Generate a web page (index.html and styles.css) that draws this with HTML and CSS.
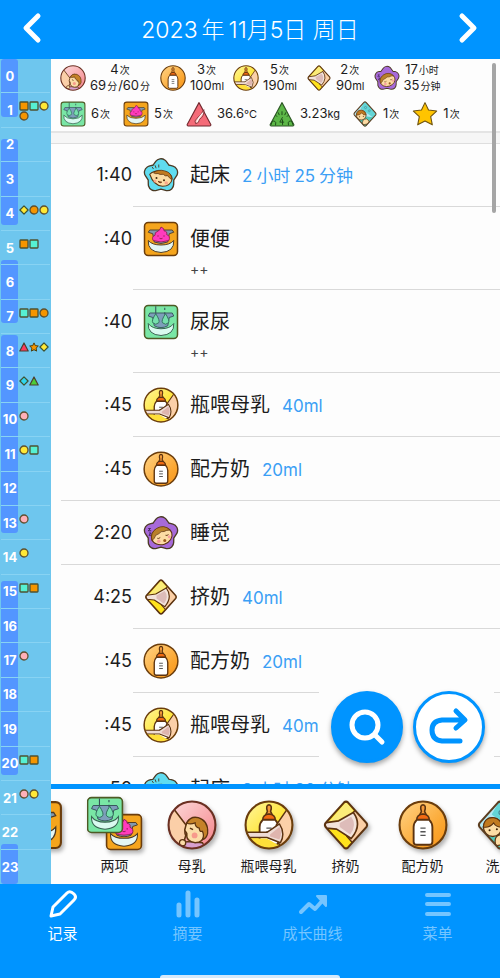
FILE: index.html
```html
<!DOCTYPE html>
<html lang="zh-CN">
<head>
    <meta charset="UTF-8">
    <meta name="viewport" content="width=device-width, initial-scale=1.0">
    <title>育儿记录</title>
    <link rel="stylesheet" href="styles.css">
</head>
<body>
    <svg class="sprite" aria-hidden="true">
        <defs>
            <linearGradient id="g-orange" x1="0" y1="0" x2="1" y2="1"><stop offset="0" stop-color="#ffd488"/><stop offset=".7" stop-color="#fba52e"/><stop offset="1" stop-color="#f7941d"/></linearGradient>
            <linearGradient id="g-yellow" x1="0" y1="0" x2="1" y2="1"><stop offset="0" stop-color="#fff6a0"/><stop offset=".6" stop-color="#ffe32e"/></linearGradient>
            <linearGradient id="g-pink" x1="0" y1="0" x2="1" y2="1"><stop offset="0" stop-color="#fddcdc"/><stop offset="1" stop-color="#f48288"/></linearGradient>
            <clipPath id="c-circle"><circle cx="24" cy="24" r="22"/></clipPath>
            <clipPath id="c-diamond"><path d="M22 2.500Q24 .5 26 2.500L43.500 22Q45 24 43.500 26L26 45.500Q24 47.500 22 45.500L4.500 26Q3 24 4.500 22Z"/></clipPath>
        </defs>

        <!-- event icons -->
        <symbol id="bottle" viewBox="0 0 48 48">
            <path d="M22.500 11Q20.500 5 24 4.500Q27.500 5 25.500 11L27 14H21Z" fill="#f59a3a" stroke="#5c3310" stroke-width="1.500"/>
            <path d="M18 19Q18 14 24 13.500Q30 14 30 19Z" fill="#f26a12" stroke="#5c3310" stroke-width="1.500"/>
            <path d="M18 19H30Q33 22 33 26V40Q33 43 30 43H18Q15 43 15 40V26Q15 22 18 19Z" fill="#fff" stroke="#5c3310" stroke-width="1.800"/>
            <path d="M21.500 27H26.500M21.500 30.500H26.500M21.500 34H26.500" stroke="#555" stroke-width="1.300"/>
        </symbol>
        <symbol id="formula" viewBox="0 0 48 48">
            <circle cx="24" cy="24" r="22.500" fill="url(#g-orange)" stroke="#6b3d0c" stroke-width="2"/>
            <use href="#bottle"/>
        </symbol>
        <symbol id="bottle-milk" viewBox="0 0 48 48">
            <circle cx="24" cy="24" r="22.500" fill="url(#g-yellow)"/>
            <use href="#bottle"/>
            <g clip-path="url(#c-circle)">
                <path d="M42 8L31 24Q30 38 36 46L50 44V8Z" fill="#fbd0a8" stroke="#5c3310" stroke-width="1.400"/>
                <path d="M0 31H22L34 23Q40 32 35 41L22 36H0" fill="#efdcd5" stroke="#5c3310" stroke-width="1.400" stroke-linejoin="round"/>
                <path d="M25 33L34 26Q37 32 34 38L25 35Z" fill="#dfb5ae"/>
                <path d="M4 37H22L34 44Q24 49 14 45Z" fill="#ffdf3a"/>
            </g>
            <circle cx="24" cy="24" r="22.500" fill="none" stroke="#6b3d0c" stroke-width="2"/>
        </symbol>
        <symbol id="pump" viewBox="0 0 48 48">
            <g clip-path="url(#c-diamond)">
                <path d="M0 0H48V48H0Z" fill="#ffe21c"/>
                <path d="M5 24L24 2L31 10Q28 16 18 19L6 22Z" fill="#fbec79"/>
                <path d="M31 12L35 7L48 24L31 42L25 35Q36 30 31 12Z" fill="#fbcfa5" stroke="#5c3310" stroke-width="1.400"/>
                <path d="M3 22L17 20L31 12Q40 24 29 37L15 28L5 27Z" fill="#f3e4dc" stroke="#5c3310" stroke-width="1.600" stroke-linejoin="round"/>
                <path d="M18 22L29 16Q35 24 28 33L18 26Z" fill="#ddbcb9"/>
            </g>
            <path d="M22 2.500Q24 .5 26 2.500L43.500 22Q45 24 43.500 26L26 45.500Q24 47.500 22 45.500L4.500 26Q3 24 4.500 22Z" fill="none" stroke="#5c3310" stroke-width="2"/>
        </symbol>
        <symbol id="nursing" viewBox="0 0 48 48">
            <circle cx="24" cy="24" r="22.500" fill="url(#g-pink)"/>
            <g clip-path="url(#c-circle)">
                <path d="M6 8L19 25Q16 30 18 34L14 48L0 44V8Z" fill="#fbcfa8" stroke="#5c3310" stroke-width="1.500"/>
                <path d="M14 48Q12 40 20 40L34 41L38 48Z" fill="#d8a0cf" stroke="#5c3310" stroke-width="1.300"/>
                <path d="M18 25Q19 18 27 17Q38 19 37 31Q35 41 27 41Q18 40 19 32L17 29Z" fill="#fbdca8" stroke="#5c3310" stroke-width="1.400"/>
                <path d="M19 22Q23 15 30 17Q40 20 39 32Q38 37 34 38Q36 34 34 30Q31 31 31 27Q27 26 27 22Q22 24 19 22Z" fill="#c58228" stroke="#5c3310" stroke-width="1.200"/>
                <circle cx="26.500" cy="34" r="2.800" fill="#f79a8c"/>
                <path d="M22 27L25 28.500" stroke="#5c3310" stroke-width="1.400"/>
                <circle cx="15" cy="41" r="3" fill="#fbdca8" stroke="#5c3310" stroke-width="1.200"/>
            </g>
            <circle cx="24" cy="24" r="22.500" fill="none" stroke="#6b3022" stroke-width="2"/>
        </symbol>
        <symbol id="flower" viewBox="0 0 48 48">
            <path d="M24 11L29 18L37.500 20.500L32.500 28L32.300 36.300L24 34L15.700 36.300L15.500 28L10.500 20.500L19 18Z" stroke="#4b3a24" stroke-width="19" stroke-linejoin="round"/>
            <path d="M24 11L29 18L37.500 20.500L32.500 28L32.300 36.300L24 34L15.700 36.300L15.500 28L10.500 20.500L19 18Z" fill="currentColor" stroke="currentColor" stroke-width="15.500" stroke-linejoin="round"/>
        </symbol>
        <symbol id="wake" viewBox="0 0 48 48">
            <use href="#flower" color="#5fdcf0"/>
            <path d="M12 13L14 16M16 11L17.500 15M21 10V14" stroke="#4b3a24" stroke-width="1.200"/>
            <path d="M9 23Q15 17 26 19Q38 21 39 29Q37 39 26 39Q14 38 9 23Z" fill="#fcdca4" stroke="#5c3310" stroke-width="1.400"/>
            <path d="M14 21Q20 16 29 18.500Q39 21 38 30Q35 28 33 25Q29 26 27 23Q22 24 20 22Q17 23 14 21Z" fill="#c17a1f" stroke="#5c3310" stroke-width="1"/>
            <circle cx="18" cy="28" r="1.300" fill="#3f2409"/><circle cx="28" cy="31" r="1.300" fill="#3f2409"/>
            <circle cx="16" cy="32" r="2" fill="#f8a58a"/><circle cx="31" cy="34.500" r="2.300" fill="#f8a58a"/>
            <path d="M20 32.500Q23 36 25 33.500Z" fill="#e5573e" stroke="#5c3310"/>
        </symbol>
        <symbol id="sleep" viewBox="0 0 48 48">
            <use href="#flower" color="#a76ad9"/>
            <path d="M7 18H10L7 21H11M8 24H11L8 27H11" fill="none" stroke="#3b2352" stroke-width="1.200"/>
            <ellipse cx="25" cy="28" rx="14" ry="11.500" transform="rotate(-18 25 28)" fill="#fcdca4" stroke="#5c3310" stroke-width="1.400"/>
            <path d="M12 34Q9 24 18 18Q28 12 36 20Q31 20 28 22Q24 21 21 25Q16 26 15 31Z" fill="#b8802a" stroke="#5c3310"/>
            <path d="M19 31Q21 32 23 30M30 27Q32 28 34 26" fill="none" stroke="#5c3310" stroke-width="1.200"/>
            <circle cx="21" cy="35" r="2.400" fill="#f8a0a0"/><circle cx="35" cy="29" r="2" fill="#f8a0a0"/>
            <circle cx="29" cy="34" r="2" fill="#9a5a1c"/>
        </symbol>
        <symbol id="poop" viewBox="0 0 48 48">
            <rect x="2" y="2" width="44" height="44" rx="5" fill="#f5a51d" stroke="#6b3d0c" stroke-width="2"/>
            <path d="M9 12H39L41 15L35 17L33 28Q24 32 15 28L13 17L7 15Z" fill="#8298ad" stroke="#4b3a24" stroke-width="1.200"/>
            <path d="M24 8Q29 10 28 13Q33 14 31.500 18Q37 20 34.500 26Q24 30 13.500 26Q11 21 16 19Q15 15 20 13.500Q23 12 24 8Z" fill="#ff3bbd" stroke="#8e1f4e" stroke-width="1.200"/>
            <path d="M20 19V21M28 19V21M22 23Q24 24.500 26 23" fill="none" stroke="#8e1f4e" stroke-width="1.200"/>
            <path d="M7 26Q12 32 24 32Q36 32 41 26Q42 41 24 42Q6 41 7 26Z" fill="#e4f6f4" stroke="#4b3a24" stroke-width="1.300"/>
        </symbol>
        <symbol id="pee" viewBox="0 0 48 48">
            <rect x="2" y="2" width="44" height="44" rx="5" fill="#79e6a5" stroke="#4d5a24" stroke-width="2"/>
            <path d="M9 12H39L41 16L35 18L33 29Q24 34 15 29L13 18L7 16Z" fill="#7d9eba" stroke="#35515a" stroke-width="1.200"/>
            <path d="M17 3V13M29 5V8M29 11V14" stroke="#35515a" stroke-width="1.400"/>
            <path d="M17 13Q23 22 21 25Q17 29 13 25Q11 22 17 13ZM30 13Q36 22 34 25Q30 29 26 25Q24 22 30 13Z" fill="#76dfad" stroke="#2e6c57" stroke-width="1.200"/>
            <path d="M7 26Q12 33 24 33Q36 33 41 26Q42 41 24 42Q6 41 7 26Z" fill="#d9faf0" stroke="#35604e" stroke-width="1.300"/>
        </symbol>
        <symbol id="both" viewBox="0 0 56 56">
            <use href="#poop" x="18" y="17" width="38" height="38"/>
            <use href="#pee" x="-1" y="0" width="38" height="38"/>
        </symbol>
        <symbol id="temperature" viewBox="0 0 48 48">
            <path d="M24 3L46 44Q46 46 44 46H4Q2 46 2 44Z" fill="#f46b78" stroke="#71282e" stroke-width="2" stroke-linejoin="round"/>
            <path d="M18 42Q14 37 20 32Q28 27 33 16Q34 28 25 34Q24 41 18 42Z" fill="#fbb6b5" stroke="#71282e" stroke-width="1.500"/>
            <path d="M20 39L24 31L31 22" fill="none" stroke="#fff" stroke-width="2"/>
        </symbol>
        <symbol id="weight" viewBox="0 0 48 48">
            <path d="M24 3L46 44Q46 46 44 46H4Q2 46 2 44Z" fill="#5cb747" stroke="#2c5724" stroke-width="2" stroke-linejoin="round"/>
            <path d="M12 26L15 29M17 21L19 26M24 19V26M31 21L29 26M36 26L33 29" stroke="#1e4a19" stroke-width="1.800"/>
            <path d="M4 44Q5 36 10 37Q14 39 12 45M44 44Q43 36 38 37Q34 39 36 45M25 30L20 39H28M25 34V44" fill="none" stroke="#1e4a19" stroke-width="1.800"/>
        </symbol>
        <symbol id="bath" viewBox="0 0 48 48">
            <g clip-path="url(#c-diamond)">
                <path d="M0 0H48V48H0Z" fill="#b4e8f2"/>
                <path d="M24 0L48 24L38 30L16 14Z" fill="#63d5d6"/>
                <circle cx="25" cy="12" r="2" fill="none" stroke="#46828f"/><circle cx="32" cy="18" r="1.800" fill="none" stroke="#46828f"/>
                <path d="M4 34Q24 24 46 32L24 50Z" fill="#51c9bb"/>
                <path d="M20 44Q17 33 27 33Q34 36 31 42Z" fill="#fcdca4" stroke="#5c3310" stroke-width="1.200"/>
                <circle cx="17" cy="26" r="9" fill="#fcdca4" stroke="#5c3310" stroke-width="1.300"/>
                <path d="M8 26Q9 16 18 17Q25 18 26 26Q20 26 18 22Q14 27 8 26Z" fill="#c17a1f" stroke="#5c3310"/>
                <circle cx="14" cy="29" r="1" fill="#3f2409"/><circle cx="21" cy="28" r="1" fill="#3f2409"/>
            </g>
            <path d="M22 2.500Q24 .5 26 2.500L43.500 22Q45 24 43.500 26L26 45.500Q24 47.500 22 45.500L4.500 26Q3 24 4.500 22Z" fill="none" stroke="#5c3e20" stroke-width="2"/>
        </symbol>
        <symbol id="star" viewBox="0 0 48 48">
            <path d="M24 3L30.500 16.500L45.500 18.500L34.500 29L37.500 44L24 37L10.500 44L13.500 29L2.500 18.500L17.500 16.500Z" fill="#ffc400" stroke="#6e5310" stroke-width="2" stroke-linejoin="round"/>
        </symbol>

        <!-- timeline marks -->
        <symbol id="m-circle" viewBox="0 0 10 10"><circle cx="5" cy="5" r="4" fill="currentColor" stroke="#5d5030" stroke-width="1.300"/></symbol>
        <symbol id="m-square" viewBox="0 0 10 10"><rect x="1" y="1" width="8" height="8" rx=".8" fill="currentColor" stroke="#4d5230" stroke-width="1.300"/></symbol>
        <symbol id="m-diamond" viewBox="0 0 10 10"><path d="M5 .9L9.100 5L5 9.100L.9 5Z" fill="currentColor" stroke="#3f5230" stroke-width="1.200" stroke-linejoin="round"/></symbol>
        <symbol id="m-triangle" viewBox="0 0 10 10"><path d="M5 1L9.200 9H.8Z" fill="currentColor" stroke="#4d3f30" stroke-width="1.200" stroke-linejoin="round"/></symbol>
        <symbol id="m-star" viewBox="0 0 10 10"><path d="M5 .9L6.300 3.600L9.300 4L7.100 6.100L7.600 9.100L5 7.700L2.400 9.100L2.900 6.100L.7 4L3.700 3.600Z" fill="currentColor" stroke="#4d3f10" stroke-linejoin="round"/></symbol>
    </svg>

    <header class="topbar">
        <button class="day-button" aria-label="前一天"><svg viewBox="0 0 20 32"><path d="M16 4L4 16L16 28"/></svg></button>
        <h1>2023<span class="gap">年</span>11月5日 周日</h1>
        <button class="day-button" aria-label="后一天"><svg viewBox="0 0 20 32"><path d="M4 4L16 16L4 28"/></svg></button>
    </header>

    <div class="middle">
        <aside class="timeline">
            <div class="sleep-bars">
                <i style="top:0%;height:7%"></i>
                <i style="top:9.700%;height:10.400%"></i>
                <i style="top:24.400%;height:7.600%"></i>
                <i style="top:33.500%;height:23.900%"></i>
                <i style="top:63.300%;height:23.500%"></i>
                <i style="top:95.200%;height:4.800%"></i>
            </div>
            <ol class="hours">
                <li><b>0</b></li>
                <li><b>1</b><span class="marks"><svg class="orange"><use href="#m-square"/></svg><svg class="mint"><use href="#m-square"/></svg><svg class="yellow"><use href="#m-circle"/></svg><svg class="orange"><use href="#m-circle"/></svg></span></li>
                <li><b>2</b></li>
                <li><b>3</b></li>
                <li><b>4</b><span class="marks"><svg class="yellow"><use href="#m-diamond"/></svg><svg class="orange"><use href="#m-circle"/></svg><svg class="yellow"><use href="#m-circle"/></svg></span></li>
                <li><b>5</b><span class="marks"><svg class="orange"><use href="#m-square"/></svg><svg class="mint"><use href="#m-square"/></svg></span></li>
                <li><b>6</b></li>
                <li><b>7</b><span class="marks"><svg class="mint"><use href="#m-square"/></svg><svg class="orange"><use href="#m-square"/></svg><svg class="orange"><use href="#m-circle"/></svg></span></li>
                <li><b>8</b><span class="marks"><svg class="red"><use href="#m-triangle"/></svg><svg class="orange"><use href="#m-star"/></svg><svg class="yellow"><use href="#m-diamond"/></svg></span></li>
                <li><b>9</b><span class="marks"><svg class="cyan"><use href="#m-diamond"/></svg><svg class="green"><use href="#m-triangle"/></svg></span></li>
                <li><b>10</b><span class="marks"><svg class="pink"><use href="#m-circle"/></svg></span></li>
                <li><b>11</b><span class="marks"><svg class="yellow"><use href="#m-circle"/></svg><svg class="mint"><use href="#m-square"/></svg></span></li>
                <li><b>12</b></li>
                <li><b>13</b><span class="marks"><svg class="pink"><use href="#m-circle"/></svg></span></li>
                <li><b>14</b><span class="marks"><svg class="yellow"><use href="#m-circle"/></svg></span></li>
                <li><b>15</b><span class="marks"><svg class="mint"><use href="#m-square"/></svg><svg class="orange"><use href="#m-square"/></svg></span></li>
                <li><b>16</b></li>
                <li><b>17</b><span class="marks"><svg class="pink"><use href="#m-circle"/></svg></span></li>
                <li><b>18</b></li>
                <li><b>19</b></li>
                <li><b>20</b><span class="marks"><svg class="mint"><use href="#m-square"/></svg><svg class="orange"><use href="#m-square"/></svg></span></li>
                <li><b>21</b><span class="marks"><svg class="pink"><use href="#m-circle"/></svg><svg class="yellow"><use href="#m-circle"/></svg></span></li>
                <li><b>22</b></li>
                <li><b>23</b></li>
            </ol>
        </aside>

        <main class="content">
            <section class="summary">
                <div class="summary-row">
                    <div class="total"><svg><use href="#nursing"/></svg><p>4<small>次</small><br>69<small>分</small>/60<small>分</small></p></div>
                    <div class="total"><svg><use href="#formula"/></svg><p>3<small>次</small><br>100<small class="latin">ml</small></p></div>
                    <div class="total"><svg><use href="#bottle-milk"/></svg><p>5<small>次</small><br>190<small class="latin">ml</small></p></div>
                    <div class="total"><svg><use href="#pump"/></svg><p>2<small>次</small><br>90<small class="latin">ml</small></p></div>
                    <div class="total"><svg><use href="#sleep"/></svg><p>17<small>小时</small><br>35<small>分钟</small></p></div>
                </div>
                <div class="summary-row single">
                    <div class="total"><svg><use href="#pee"/></svg><p>6<small>次</small></p></div>
                    <div class="total"><svg><use href="#poop"/></svg><p>5<small>次</small></p></div>
                    <div class="total"><svg><use href="#temperature"/></svg><p>36.6<small class="latin">°C</small></p></div>
                    <div class="total"><svg><use href="#weight"/></svg><p>3.23<small class="latin">kg</small></p></div>
                    <div class="total"><svg><use href="#bath"/></svg><p>1<small>次</small></p></div>
                    <div class="total"><svg><use href="#star"/></svg><p>1<small>次</small></p></div>
                </div>
            </section>

            <div class="records">
                <ul class="record-list">
                    <li><time>1:40</time><svg><use href="#wake"/></svg><div class="entry"><span>起床</span><em>2<span class="gap">小时</span>25<span class="gap">分钟</span></em></div></li>
                    <li class="noted"><time>:40</time><svg><use href="#poop"/></svg><div class="entry"><span>便便</span><p>++</p></div></li>
                    <li class="noted"><time>:40</time><svg><use href="#pee"/></svg><div class="entry"><span>尿尿</span><p>++</p></div></li>
                    <li><time>:45</time><svg><use href="#bottle-milk"/></svg><div class="entry"><span>瓶喂母乳</span><em>40ml</em></div></li>
                    <li class="hour-end"><time>:45</time><svg><use href="#formula"/></svg><div class="entry"><span>配方奶</span><em>20ml</em></div></li>
                    <li class="hour-end"><time>2:20</time><svg><use href="#sleep"/></svg><div class="entry"><span>睡觉</span></div></li>
                    <li><time>4:25</time><svg><use href="#pump"/></svg><div class="entry"><span>挤奶</span><em>40ml</em></div></li>
                    <li><time>:45</time><svg><use href="#formula"/></svg><div class="entry"><span>配方奶</span><em>20ml</em></div></li>
                    <li><time>:45</time><svg><use href="#bottle-milk"/></svg><div class="entry"><span>瓶喂母乳</span><em>40ml</em></div></li>
                    <li><time>:50</time><svg><use href="#wake"/></svg><div class="entry"><span>起床</span><em>2<span class="gap">小时</span>20<span class="gap">分钟</span></em></div></li>
                </ul>
                <div class="floating">
                    <button class="round filled" aria-label="搜索"><svg viewBox="0 0 40 40"><circle cx="18" cy="18" r="13"/><path d="M28 28L35 35"/></svg></button>
                    <button class="round" aria-label="跳转"><svg viewBox="0 0 40 40"><path d="M34 13H13Q3 14 3 23Q3 33 13 34H31M27 4L36 13L27 21"/></svg></button>
                </div>
            </div>

            <div class="toolbar">
                <div class="toolbar-track">
                    <button aria-label="便便"><svg><use href="#poop"/></svg></button>
                    <button><svg class="pair"><use href="#both"/></svg><span>两项</span></button>
                    <button><svg><use href="#nursing"/></svg><span>母乳</span></button>
                    <button><svg><use href="#bottle-milk"/></svg><span>瓶喂母乳</span></button>
                    <button><svg><use href="#pump"/></svg><span>挤奶</span></button>
                    <button><svg><use href="#formula"/></svg><span>配方奶</span></button>
                    <button><svg><use href="#bath"/></svg><span>洗澡</span></button>
                </div>
            </div>
            <div class="scrollbar"></div>
        </main>
    </div>

    <nav class="tabs">
        <a href="#" class="active"><svg viewBox="0 0 32 32"><path d="M4 28L6 19L20 5Q23 2 27 6Q30 9 27 12L13 26Z" stroke-width="3"/></svg>记录</a>
        <a href="#"><svg viewBox="0 0 32 32"><path d="M7 17V27M16 5V27M25 12V27" stroke-width="5"/></svg>摘要</a>
        <a href="#"><svg viewBox="0 0 32 32"><path d="M4 24L12 16L18 21L26 12"/><path d="M20 8H29V18Z" fill="currentColor" stroke-width="2"/></svg>成长曲线</a>
        <a href="#"><svg viewBox="0 0 32 32"><path d="M5 7H27M5 16H27M5 26H27"/></svg>菜单</a>
        <div class="home-indicator"></div>
    </nav>
</body>
</html>
```

FILE: styles.css
```css
* {
    box-sizing: border-box;
}
body {
    margin: 0;
    height: 100vh;
    display: flex;
    flex-direction: column;
    overflow: hidden;
    background: #fdfdfd;
    color: #1c1c1c;
    font-family: Inter, "Noto Sans CJK SC", sans-serif;
}
h1, p, ol, ul {
    margin: 0;
    padding: 0;
}
ol, ul {
    list-style: none;
}
button {
    border: none;
    padding: 0;
    background: none;
    color: inherit;
    font-family: inherit;
    cursor: pointer;
}
svg {
    display: block;
    flex-shrink: 0;
}
.sprite {
    position: absolute;
    width: 0;
    height: 0;
}
.gap {
    margin: 0 4px;
}

/* header */
.topbar {
    flex: none;
    height: 59px;
    padding: 0 20px 4px;
    display: flex;
    align-items: center;
    justify-content: space-between;
    background: #0094ff;
    color: #fff;
}
.topbar h1 {
    font-size: 23px;
    font-weight: 300;
}
.day-button svg {
    width: 24px;
    height: 32px;
    fill: none;
    stroke: #fff;
    stroke-width: 5;
    stroke-linecap: round;
    stroke-linejoin: round;
}

.middle {
    flex: 1;
    min-height: 0;
    display: flex;
}

/* 24 hour timeline */
.timeline {
    position: relative;
    flex: none;
    width: 51px;
    background: #6ec6ee;
}
.sleep-bars i {
    position: absolute;
    left: 1px;
    width: 17px;
    border-radius: 3px;
    background: #5396ff;
}
.hours {
    position: relative;
    height: 100%;
    display: grid;
    grid-template-rows: repeat(24, 1fr);
    padding: 0 1px;
}
.hours li {
    display: flex;
    min-height: 0;
    border-bottom: 1px solid #88d3f3;
}
.hours li:last-child {
    border-bottom: none;
}
.hours b {
    width: 18px;
    display: flex;
    align-items: center;
    justify-content: center;
    color: #fff;
    font-size: 13px;
    font-weight: 700;
}
.marks {
    width: 30px;
    padding-top: 8px;
    display: flex;
    flex-wrap: wrap;
    align-content: flex-start;
}
.marks svg {
    width: 10px;
    height: 10px;
}
.orange { color: #f59500; }
.mint { color: #56f0d2; }
.yellow { color: #ffe836; }
.pink { color: #ffb0b8; }
.red { color: #ff3a5c; }
.cyan { color: #30d6ee; }
.green { color: #4ccc38; }

.content {
    position: relative;
    flex: 1;
    min-width: 0;
    display: flex;
    flex-direction: column;
}

/* totals of the day */
.summary {
    flex: none;
    height: 84px;
    border-bottom: 10px solid #f6f6f6;
    box-shadow: inset 0 -2px #e4e4e4, 0 1px #dedede;
}
.summary-row {
    display: flex;
    gap: 9px;
    padding: 2px 9px 0;
    height: 36px;
}
.total {
    display: flex;
    align-items: center;
    gap: 4px;
    white-space: nowrap;
}
.total svg {
    width: 26px;
    height: 26px;
}
.total p {
    font-size: 13px;
    line-height: 15px;
    text-align: center;
}
.total small {
    margin: 0 1px;
    font-size: 10px;
}
.total .latin {
    margin: 0;
    font-size: 11px;
}
.summary-row.single {
    gap: 12px;
}
.single .total {
    gap: 5px;
}

/* records */
.records {
    position: relative;
    flex: 1;
    min-height: 0;
    overflow: hidden;
}
.record-list li {
    position: relative;
    display: flex;
    height: 64px;
    padding-top: 14px;
}
.record-list li.noted {
    height: 83px;
}
.record-list li::after {
    content: "";
    position: absolute;
    left: 82px;
    right: 0;
    bottom: 0;
    height: 1px;
    background: #d9d9d9;
}
.record-list li.hour-end::after {
    left: 10px;
}
.record-list time {
    width: 81px;
    text-align: right;
    font-size: 18px;
    line-height: 36px;
}
.record-list svg {
    width: 36px;
    height: 36px;
    margin: 0 11px;
}
.entry {
    font-size: 20px;
    line-height: 36px;
    white-space: nowrap;
}
.entry em {
    margin-left: 12px;
    color: #3b9ff5;
    font-size: 17px;
    font-style: normal;
}
.entry p {
    font-size: 14px;
    line-height: 24px;
    color: #444;
}
.floating {
    position: absolute;
    right: 6px;
    bottom: 14px;
    display: flex;
    gap: 10px;
    padding: 7px 9px 7px 12px;
    background: #fdfdfd;
}
.round {
    width: 72px;
    height: 72px;
    display: flex;
    align-items: center;
    justify-content: center;
    border: 3px solid #0094ff;
    border-radius: 50%;
    background: #fff;
    color: #0094ff;
    box-shadow: 0 3px 5px rgba(0, 0, 0, 0.35);
}
.round svg {
    width: 40px;
    height: 40px;
    fill: none;
    stroke: currentColor;
    stroke-width: 5;
    stroke-linecap: round;
    stroke-linejoin: round;
}
.round.filled {
    background: #0094ff;
    color: #fff;
}
.scrollbar {
    position: absolute;
    top: 4px;
    right: 4px;
    width: 4px;
    height: 150px;
    border-radius: 2px;
    background: #a5a5a5;
}

/* quick add */
.toolbar {
    flex: none;
    height: 100px;
    border-top: 5px solid #0094ff;
    overflow: hidden;
}
.toolbar-track {
    display: flex;
    align-items: flex-start;
    margin-left: -52px;
}
.toolbar button {
    flex: none;
    width: 77px;
    display: flex;
    flex-direction: column;
    align-items: center;
    font-size: 14px;
    line-height: 20px;
    white-space: nowrap;
}
.toolbar svg {
    width: 50px;
    height: 50px;
    margin: 11px 0 6px;
    filter: drop-shadow(2px 3px 2px rgba(0, 0, 0, 0.3));
}
.toolbar svg.pair {
    width: 56px;
    height: 56px;
    margin: 7px 0 4px;
}

/* bottom tabs */
.tabs {
    position: relative;
    flex: none;
    height: 94px;
    display: grid;
    grid-template-columns: repeat(4, 1fr);
    background: #0094ff;
}
.tabs a {
    display: flex;
    flex-direction: column;
    align-items: center;
    padding-top: 4px;
    gap: 2px;
    color: #75c5ff;
    font-size: 15px;
    line-height: 24px;
    text-decoration: none;
}
.tabs a.active {
    color: #fff;
}
.tabs svg {
    width: 32px;
    height: 32px;
    fill: none;
    stroke: currentColor;
    stroke-width: 4;
    stroke-linecap: round;
    stroke-linejoin: round;
}
.home-indicator {
    position: absolute;
    bottom: 0;
    left: 32%;
    right: 32%;
    height: 3px;
    border-radius: 3px 3px 0 0;
    background: #d4e9fb;
}
```
